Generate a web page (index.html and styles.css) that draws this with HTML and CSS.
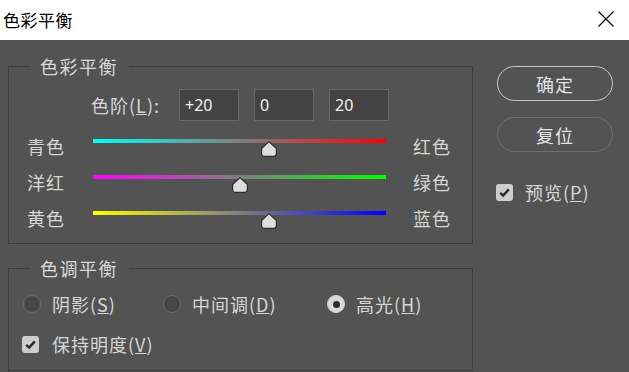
FILE: index.html
```html
<!DOCTYPE html>
<html lang="zh-CN">
<head>
    <meta charset="UTF-8">
    <title>色彩平衡</title>
    <link rel="stylesheet" href="styles.css">
</head>
<body>

    <div class="titlebar">
        <span class="title">色彩平衡</span>
        <svg class="close" width="16" height="16" viewBox="0 0 16 16">
            <path d="M0.5 0.5 L15.5 15.5 M15.5 0.5 L0.5 15.5" stroke="#000" stroke-width="1.1" fill="none"/>
        </svg>
    </div>

    <div class="dialog">
        <div class="main">
            <fieldset class="group balance">
                <legend>色彩平衡</legend>

                <div class="levels">
                    <label class="levels-label">色阶(<u>L</u>):</label>
                    <input class="num" type="text" value="+20">
                    <input class="num" type="text" value="0">
                    <input class="num" type="text" value="20">
                </div>

                <div class="slider-row">
                    <span class="side">青色</span>
                    <div class="slider">
                        <div class="track cyan-red"></div>
                        <svg class="thumb" style="left: 60%" width="16" height="16" viewBox="0 0 16 16"><path d="M8 0.6 L15.4 7.6 V12.6 Q15.4 15.4 12.6 15.4 H3.4 Q0.6 15.4 0.6 12.6 V7.6 Z"/></svg>
                    </div>
                    <span class="side right">红色</span>
                </div>

                <div class="slider-row">
                    <span class="side">洋红</span>
                    <div class="slider">
                        <div class="track magenta-green"></div>
                        <svg class="thumb" style="left: 50%" width="16" height="16" viewBox="0 0 16 16"><path d="M8 0.6 L15.4 7.6 V12.6 Q15.4 15.4 12.6 15.4 H3.4 Q0.6 15.4 0.6 12.6 V7.6 Z"/></svg>
                    </div>
                    <span class="side right">绿色</span>
                </div>

                <div class="slider-row">
                    <span class="side">黄色</span>
                    <div class="slider">
                        <div class="track yellow-blue"></div>
                        <svg class="thumb" style="left: 60%" width="16" height="16" viewBox="0 0 16 16"><path d="M8 0.6 L15.4 7.6 V12.6 Q15.4 15.4 12.6 15.4 H3.4 Q0.6 15.4 0.6 12.6 V7.6 Z"/></svg>
                    </div>
                    <span class="side right">蓝色</span>
                </div>
            </fieldset>

            <fieldset class="group tone">
                <legend>色调平衡</legend>

                <div class="tones">
                    <label class="radio"><span class="dot"></span><span>阴影(<u>S</u>)</span></label>
                    <label class="radio"><span class="dot"></span><span>中间调(<u>D</u>)</span></label>
                    <label class="radio"><span class="dot on"></span><span>高光(<u>H</u>)</span></label>
                </div>

                <label class="check keep">
                    <span class="box"><svg width="13" height="13" viewBox="0 0 13 13"><path d="M2.2 6.8 L5.2 9.6 L10.8 3.4" stroke="#2a2a2a" stroke-width="2.4" fill="none"/></svg></span>
                    <span>保持明度(<u>V</u>)</span>
                </label>
            </fieldset>
        </div>

        <div class="side-col">
            <button class="btn primary">确定</button>
            <button class="btn">复位</button>
            <label class="check preview">
                <span class="box"><svg width="13" height="13" viewBox="0 0 13 13"><path d="M2.2 6.8 L5.2 9.6 L10.8 3.4" stroke="#2a2a2a" stroke-width="2.4" fill="none"/></svg></span>
                <span>预览(<u>P</u>)</span>
            </label>
        </div>
    </div>

</body>
</html>
```

FILE: styles.css
```css
body {
    margin: 0;
    width: 629px;
    height: 372px;
    overflow: hidden;
    background: #535353;
    font-family: "Noto Sans CJK SC", "Noto Sans", sans-serif;
    color: #d6d6d6;
}

.titlebar {
    height: 40px;
    background: #fff;
    display: flex;
    align-items: center;
    justify-content: space-between;
    padding: 0 15px 0 3px;
}

.title {
    font-size: 17px;
    color: #000;
    letter-spacing: 0.5px;
    line-height: 20px;
}

.close {
    display: block;
    margin-top: -2px;
}

.dialog {
    display: flex;
    gap: 24px;
    padding-left: 8px;
}

.main {
    width: 465px;
}

/* рамки групп */
.group {
    margin: 0;
    padding: 0;
    min-width: 0;
    border: 1px solid #3e3e3e;
}

.group legend {
    margin-left: 21px;
    padding: 0 11px 0 10px;
    font-size: 18px;
    line-height: 20px;
    letter-spacing: 1.5px;
    color: #dadada;
}

.balance {
    margin-top: 16px;
    padding-bottom: 14px;
}

.tone {
    margin-top: 14px;
    padding-bottom: 16px;
}

.levels {
    display: flex;
    align-items: center;
    margin: 13px 0 0 82px;
    gap: 15px;
}

.levels-label {
    width: 73px;
    font-size: 18px;
    line-height: 20px;
    letter-spacing: 1px;
}

.num {
    width: 60px;
    height: 32px;
    box-sizing: border-box;
    background: #434343;
    border: 1px solid #676767;
    color: #f2f2f2;
    font-family: "Noto Sans", sans-serif;
    font-size: 16px;
    padding: 0 5px;
    outline: none;
}

.slider-row {
    display: grid;
    grid-template-columns: 66px 293px auto;
    grid-template-rows: 18px;
    align-items: center;
    height: 18px;
    margin-top: 18px;
    padding-left: 18px;
}

.side {
    font-size: 18px;
    line-height: 20px;
    letter-spacing: 1px;
    margin-bottom: 5px;
}

.side.right {
    padding-left: 27px;
}

.slider {
    position: relative;
    height: 18px;
}

.track {
    height: 4px;
}

.cyan-red {
    background: linear-gradient(to right, #00ffff, #ff0000);
}

.magenta-green {
    background: linear-gradient(to right, #ff00ff, #00ff00);
}

.yellow-blue {
    background: linear-gradient(to right, #ffff00, #0000ff);
}

.thumb {
    position: absolute;
    top: 2px;
    margin-left: -8px;
    fill: #dedede;
    stroke: #2c2c2c;
    stroke-width: 1.2;
}

.tones {
    display: grid;
    grid-template-columns: 140px 164px auto;
    margin-top: 16px;
    padding-left: 14px;
}

.radio {
    display: flex;
    align-items: center;
    gap: 11px;
    font-size: 18px;
    line-height: 20px;
    letter-spacing: 1px;
}

.dot {
    width: 18px;
    height: 18px;
    box-sizing: border-box;
    border-radius: 50%;
    background: #474747;
    border: 1px solid #6a6a6a;
    display: flex;
    align-items: center;
    justify-content: center;
}

.dot.on {
    background: #d9d9d9;
    border-color: #d9d9d9;
}

.dot.on::after {
    content: "";
    width: 7px;
    height: 7px;
    border-radius: 50%;
    background: #2a2a2a;
}

.check {
    display: flex;
    align-items: center;
    gap: 13px;
    font-size: 18px;
    line-height: 20px;
    letter-spacing: 1px;
    white-space: nowrap;
}

.keep {
    margin-top: 20px;
    padding-left: 13px;
}

.box {
    width: 17px;
    height: 17px;
    border-radius: 3px;
    background: #cdcdcd;
    display: flex;
    align-items: center;
    justify-content: center;
}

.side-col {
    display: flex;
    flex-direction: column;
    width: 116px;
    margin-top: 26px;
}

.btn {
    height: 35px;
    border-radius: 18px;
    background: transparent;
    border: 1.5px solid #6f6f6f;
    color: #e4e4e4;
    font-family: "Noto Sans CJK SC", sans-serif;
    font-size: 18px;
    letter-spacing: 1px;
    margin-bottom: 16px;
    padding: 0;
}

.btn.primary {
    border-color: #c9c9c9;
}

.preview {
    margin-top: 14px;
    gap: 12px;
    margin-left: -1px;
}
```
